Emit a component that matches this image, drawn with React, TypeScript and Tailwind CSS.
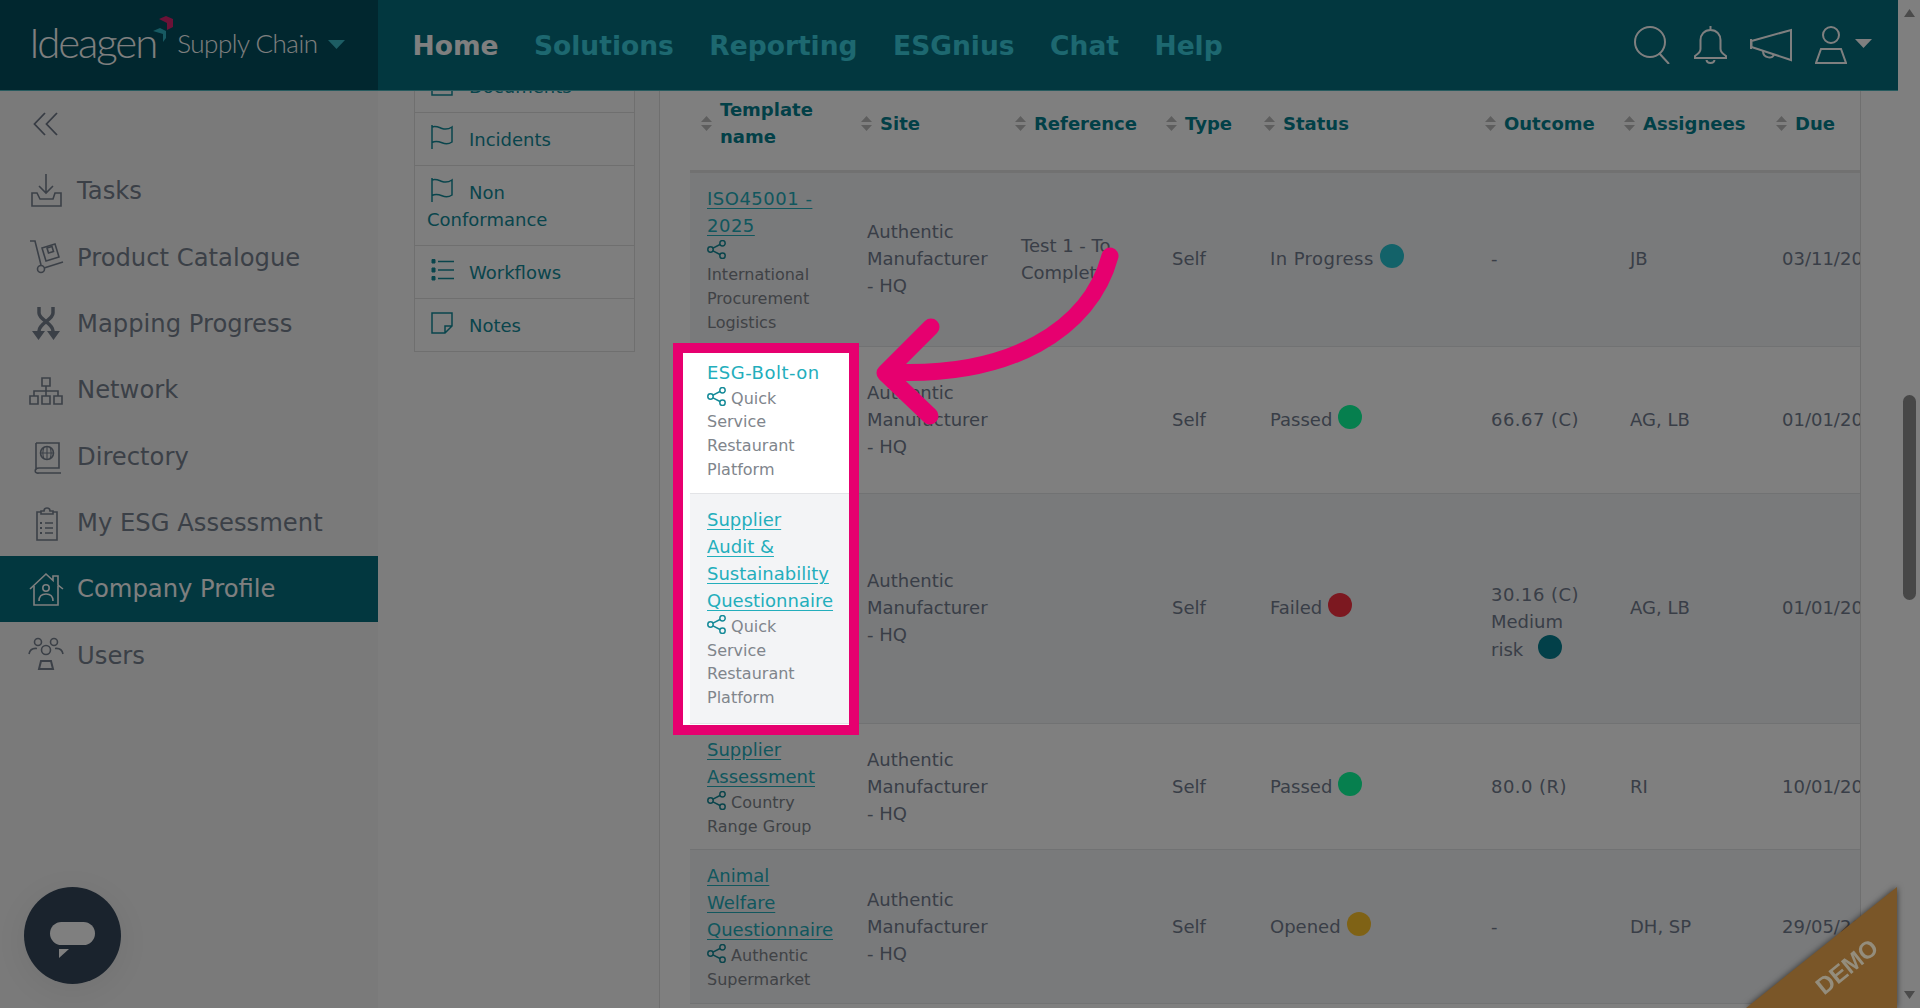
import React from "react";

const iconBox = "inline-block -my-[4px] mr-[16px] ml-[4px] align-[1px]";
const Flag = () => (
  <svg viewBox="0 0 22 24" width="22" height="24" fill="none" stroke="currentColor" strokeWidth="1.5" className={iconBox}>
    <path d="M1 0V24M1 2c4-1.5 7 .5 10 1.5s7 .5 10-1.5V17c-3 2-7 2-10 .8S4 16 1 17.500" />
  </svg>
);
const DocIcon = () => (
  <svg viewBox="0 0 22 24" width="22" height="24" fill="none" stroke="currentColor" strokeWidth="1.5" className={iconBox}>
    <path d="M1 1H21V23H1Z" />
  </svg>
);
const ListIcon = () => (
  <svg viewBox="0 0 24 24" width="24" height="24" fill="none" stroke="currentColor" strokeWidth="1.5" className="inline-block -my-[4px] mr-[14px] ml-[4px] align-[1px]">
    <path d="M7 3.500H23M7 12H23M7 20.500H23" />
    <path d="M1 1.500H4V5H1ZM1 10H4V14H1ZM1 18.500H4V22H1Z" fill="currentColor" strokeWidth="1" />
  </svg>
);
const NoteIcon = () => (
  <svg viewBox="0 0 22 24" width="22" height="24" fill="none" stroke="currentColor" strokeWidth="1.5" className={iconBox}>
    <path d="M1 2H21V15L14 22H1ZM21 15H14V22" />
  </svg>
);
const Share = () => (
  <svg viewBox="0 0 19 19" width="19" height="19" fill="none" stroke="#148a98" strokeWidth="1.500" className="inline-block -my-[3px] align-[1px]">
    <circle cx="3.500" cy="9.500" r="2.700" />
    <circle cx="15.500" cy="3.200" r="2.700" />
    <circle cx="15.500" cy="15.800" r="2.700" />
    <path d="M6 8.200 13 4.500M6 10.800 13 14.500" />
  </svg>
);
const Sort = () => (
  <svg viewBox="0 0 11 15" width="11" height="15" className="shrink-0" fill="#bdbdbd">
    <path d="M5.500 0 11 6H0ZM0 9H11L5.500 15Z" />
  </svg>
);
const Dot = ({ c }: { c: string }) => <span className={`inline-block size-[24px] rounded-full ml-[6px] -my-[2px] align-[-1px] ${c}`} />;

const sideIcons: Record<string, React.ReactNode> = {
  tasks: (
    <>
      <path d="M18 1V20M11 13l7 7 7-7" />
      <path d="M9 20H4V33H33V20H27L25 26H12L9 20Z" />
    </>
  ),
  product: (
    <>
      <path d="M2 2H7L13 26" />
      <circle cx="13" cy="30" r="3.500" />
      <path d="M16 29 35 23" />
      <path d="M14 9 27 5l4 13-13 4Z" />
      <path d="M19 9l5-1.500 1.500 5-5 1.500Z" />
    </>
  ),
  map: (
    <>
      <path d="M11 1V7C11 14 25 17 25 25V30" strokeWidth="3.500" />
      <path d="M25 1V7C25 14 11 17 11 25V30" strokeWidth="3.500" />
      <path d="M4 25H17L10.500 34ZM19 25H32L25.500 34Z" fill="currentColor" stroke="none" />
    </>
  ),
  network: (
    <>
      <path d="M14 6H22V14H14ZM2 24H10V32H2ZM14 24H22V32H14ZM26 24H34V32H26Z" />
      <path d="M18 14V24M6 24V19H30V24" />
    </>
  ),
  dir: (
    <>
      <path d="M8 5H31V30H11C6 30 6 36 11 35H33M8 5V32" />
      <circle cx="19" cy="15" r="6.500" />
      <path d="M12.500 15H25.500M19 8.500V21.500M16 9C14.500 13 14.500 17 16 21M22 9C23.500 13 23.500 17 22 21" strokeWidth="1.100" />
    </>
  ),
  esg: (
    <>
      <path d="M13 7H9V35H29V7H25" />
      <path d="M13 9V6H16C16 2 22 2 22 6H25V9Z" />
      <path d="M17 18H25M17 23H25M17 28H25" />
      <path d="M12 18H14M12 23H14M12 28H14" strokeWidth="2" />
    </>
  ),
  company: (
    <>
      <path d="M2 18 18 3l7 6.500V5H30V14L35 18" />
      <path d="M6 15V34H30V15" />
      <circle cx="18" cy="17" r="3.200" />
      <path d="M11 30C11 25 14 23 18 23S25 25 25 30" />
    </>
  ),
  users: (
    <>
      <circle cx="10" cy="5" r="3.500" />
      <circle cx="26" cy="5" r="3.500" />
      <circle cx="18" cy="13" r="4.500" />
      <path d="M1 17C2 12 5 11 9 11.500M35 17C34 12 31 11 27 11.500" />
      <path d="M11 32 13 24H23L25 32Z" strokeWidth="2" />
    </>
  ),
};

const SideItem = ({ icon, label, active }: { icon: string; label: string; active?: boolean }) => (
  <div className={`h-[66.300px] flex items-center pl-[28px] gap-[13px] text-[24.250px] ${active ? "bg-[#046e7e] text-white" : "text-[#77818f]"}`}>
    <svg viewBox="0 0 36 36" width="36" height="36" fill="none" stroke="currentColor" strokeWidth="1.600" className="shrink-0">
      {sideIcons[icon]}
    </svg>
    <span className="pt-[1px]">{label}</span>
  </div>
);

const SubItem = ({ children }: { children: React.ReactNode }) => (
  <div className="border-b border-[#dedede] px-[12px] py-[12.500px] text-[18px] leading-[27px] text-[#128a99] last:border-b-0">{children}</div>
);

const Name = ({ title, org, link = true, spaced }: { title: string; org: React.ReactNode; link?: boolean; spaced?: boolean }) => (
  <td className="align-top pl-[17px] pr-[18px] pt-[12px] pb-[11px]">
    <div className={`text-[18px] leading-[27px] text-[#23aebc] ${link ? "underline underline-offset-[3px]" : ""} ${spaced ? "tracking-[0.500px]" : ""}`}>{title}</div>
    <div className="mt-[1px] text-[16px] leading-[23.800px] text-[#80858c]">
      <Share /> {org}
    </div>
  </td>
);

const Cell = ({ children, className = "" }: { children?: React.ReactNode; className?: string }) => (
  <td className={`align-middle pl-[17px] pb-[1px] text-[18px] leading-[27px] text-[#727d8f] ${className}`}>{children}</td>
);

const Row = ({ bg, children, className = "" }: { bg: boolean; children: React.ReactNode; className?: string }) => (
  <tr className={`border-b border-[#e3e4e7] ${bg ? "bg-[#f3f4f6]" : "bg-white"} ${className}`}>{children}</tr>
);

const Site = () => (
  <Cell>
    Authentic
    <br />
    Manufacturer
    <br />- HQ
  </Cell>
);

const Score = ({ children }: { children: React.ReactNode }) => <span className="tracking-[0.450px]">{children}</span>;

const heads = ["Template name", "Site", "Reference", "Type", "Status", "Outcome", "Assignees", "Due"];

export default function App() {
  return (
    <div className="relative h-[1008px] w-full overflow-hidden flex bg-white font-['DejaVu_Sans',sans-serif]">
      <div className="w-[1898px] shrink-0 flex flex-col h-full">
        <header className="h-[91px] shrink-0 flex bg-[#046e7e] border-b border-[#4fb5bd]">
          <div className="w-[378px] shrink-0 bg-[#024e5e] flex items-center pl-[29px] pb-[1px] font-['Lato',sans-serif] font-light text-white">
            <span className="text-[42px] tracking-[-2.100px] leading-none mb-[6px]">Ideagen</span>
            <svg viewBox="0 0 20 28" width="20" height="28" className="-ml-[3px] mb-[30px] shrink-0">
              <path d="M6 3 13 0l7 3v8l-6 3v-7Z" fill="#d8246f" />
              <path d="M0 15l7-3 6 3v7l-3 4v-8Z" fill="#2fb4c4" />
            </svg>
            <span className="text-[26px] tracking-[-0.500px] ml-[4px] mb-[2px]">Supply Chain</span>
            <svg viewBox="0 0 17 9" width="17" height="9" className="ml-[11px] shrink-0">
              <path d="M0 0H17L8.500 9Z" fill="#3bbac8" />
            </svg>
          </div>
          <nav className="flex items-center gap-[35.500px] pl-[34.500px] pt-[2px] text-[26.500px] font-bold text-[#3bd0e0]">
            <span className="text-white">Home</span>
            <span>Solutions</span>
            <span>Reporting</span>
            <span>ESGnius</span>
            <span>Chat</span>
            <span>Help</span>
          </nav>
          <div className="ml-auto flex items-center pr-[26px] text-white">
            <svg viewBox="0 0 36 38" width="36" height="38" fill="none" stroke="currentColor" strokeWidth="2">
              <circle cx="16" cy="16" r="15" />
              <path d="M25 27 35 38" />
            </svg>
            <svg viewBox="0 0 33 38" width="33" height="38" fill="none" stroke="currentColor" strokeWidth="2" className="ml-[24px]">
              <path d="M16.500 0V4M16.500 4C10 4 6.500 9 6.500 14V23C6.500 26 4 28 1 30V32H32V30C29 28 26.500 26 26.500 23V14C26.500 9 23 4 16.500 4Z" />
              <path d="M12.500 34C13 38 20 38 20.500 34" />
            </svg>
            <svg viewBox="0 0 42 34" width="42" height="34" fill="none" stroke="currentColor" strokeWidth="2" className="ml-[23px]">
              <path d="M1 11V21M1.500 13 41 2V32L1.500 19Z" />
              <path d="M13 23C13 31 24 31 24 26" />
            </svg>
            <svg viewBox="0 0 32 38" width="32" height="38" fill="none" stroke="currentColor" strokeWidth="2" className="ml-[23px]">
              <circle cx="16" cy="9" r="8" />
              <path d="M6 23H26L31 37H1Z" />
            </svg>
            <svg viewBox="0 0 17 9" width="17" height="9" className="ml-[8px] mb-[4px]">
              <path d="M0 0H17L8.500 9Z" fill="currentColor" />
            </svg>
          </div>
        </header>
        <div className="flex-1 flex min-h-0">
          <aside className="w-[378px] shrink-0 bg-[#f5f5f5] flex flex-col">
            <div className="h-[67px] flex items-center pl-[33px] text-[#6f7888]">
              <svg viewBox="0 0 25 24" width="25" height="24" fill="none" stroke="currentColor" strokeWidth="1.800" className="mb-[1px]">
                <path d="M12 1 1.500 12 12 23M24 1 13.500 12 24 23" />
              </svg>
            </div>
            <SideItem icon="tasks" label="Tasks" />
            <SideItem icon="product" label="Product Catalogue" />
            <SideItem icon="map" label="Mapping Progress" />
            <SideItem icon="network" label="Network" />
            <SideItem icon="dir" label="Directory" />
            <SideItem icon="esg" label="My ESG Assessment" />
            <SideItem icon="company" label="Company Profile" active />
            <SideItem icon="users" label="Users" />
          </aside>
          <div className="w-[281px] shrink-0 bg-[#fafafa] pl-[36px] overflow-hidden">
            <div className="w-[221px] -mt-[32px] border border-[#dedede] bg-[#fcfcfc]">
              <SubItem>
                <DocIcon />
                Documents
              </SubItem>
              <SubItem>
                <Flag />
                Incidents
              </SubItem>
              <SubItem>
                <Flag />
                Non Conformance
              </SubItem>
              <SubItem>
                <ListIcon />
                Workflows
              </SubItem>
              <SubItem>
                <NoteIcon />
                Notes
              </SubItem>
            </div>
          </div>
          <div className="flex-1 border-l border-[#dedede] pl-[30px] overflow-hidden">
            <div className="w-[1171px] border-r border-[#dedede] h-full">
              <table className="table-fixed w-[1170px]">
                <colgroup>
                  <col className="w-[160px]" />
                  <col className="w-[154px]" />
                  <col className="w-[151px]" />
                  <col className="w-[98px]" />
                  <col className="w-[221px]" />
                  <col className="w-[139px]" />
                  <col className="w-[152px]" />
                  <col className="w-[95px]" />
                </colgroup>
                <thead>
                  <tr className="h-[80px] border-b-[3px] border-[#e2e2e2]">
                    {heads.map((h) => (
                      <th key={h} className="pl-[11px] align-middle text-left font-bold text-[18px] leading-[27px] text-[#04808f]">
                        <div className="flex items-center gap-[8px] pb-[14px]">
                          <Sort />
                          <span>{h}</span>
                        </div>
                      </th>
                    ))}
                  </tr>
                </thead>
                <tbody>
                  <Row bg className="h-[175px]">
                    <Name title="ISO45001 - 2025" spaced org="International Procurement Logistics" />
                    <Site />
                    <Cell>
                      Test 1 - To
                      <br />
                      Complete
                    </Cell>
                    <Cell>Self</Cell>
                    <Cell>
                      <span className="tracking-[0.400px]">In Progress</span>
                      <Dot c="bg-[#26c4d2]" />
                    </Cell>
                    <Cell>-</Cell>
                    <Cell>JB</Cell>
                    <Cell className="whitespace-nowrap overflow-hidden">03/11/2025</Cell>
                  </Row>
                  <Row bg={false}>
                    <Name title="ESG-Bolt-on" link={false} spaced org="Quick Service Restaurant Platform" />
                    <Site />
                    <Cell />
                    <Cell>Self</Cell>
                    <Cell>
                      Passed
                      <Dot c="bg-[#0cfe9c]" />
                    </Cell>
                    <Cell>
                      <Score>66.67 (C)</Score>
                    </Cell>
                    <Cell>AG, LB</Cell>
                    <Cell className="whitespace-nowrap overflow-hidden">01/01/2026</Cell>
                  </Row>
                  <Row bg className="h-[230px]">
                    <Name title="Supplier Audit & Sustainability Questionnaire" org="Quick Service Restaurant Platform" />
                    <Site />
                    <Cell />
                    <Cell>Self</Cell>
                    <Cell>
                      Failed
                      <Dot c="bg-[#f83040]" />
                    </Cell>
                    <Cell className="pt-[28px]">
                      <Score>30.16 (C)</Score>
                      <br />
                      Medium
                      <br />
                      <span className="inline-block mt-[1px]">
                        risk <Dot c="bg-[#048092] ml-[9px]" />
                      </span>
                    </Cell>
                    <Cell>AG, LB</Cell>
                    <Cell className="whitespace-nowrap overflow-hidden">01/01/2026</Cell>
                  </Row>
                  <Row bg={false}>
                    <Name title="Supplier Assessment" org="Country Range Group" />
                    <Site />
                    <Cell />
                    <Cell>Self</Cell>
                    <Cell>
                      Passed
                      <Dot c="bg-[#0cfe9c]" />
                    </Cell>
                    <Cell>
                      <Score>80.0 (R)</Score>
                    </Cell>
                    <Cell>RI</Cell>
                    <Cell className="whitespace-nowrap overflow-hidden">10/01/2026</Cell>
                  </Row>
                  <Row bg>
                    <Name title="Animal Welfare Questionnaire" org="Authentic Supermarket" />
                    <Site />
                    <Cell />
                    <Cell>Self</Cell>
                    <Cell>
                      Opened
                      <Dot c="bg-[#ffc42a]" />
                    </Cell>
                    <Cell>-</Cell>
                    <Cell>DH, SP</Cell>
                    <Cell className="whitespace-nowrap overflow-hidden">29/05/2025</Cell>
                  </Row>
                </tbody>
              </table>
            </div>
          </div>
        </div>
      </div>
      <div className="flex-1 flex flex-col items-center bg-white pt-[9px] pb-[9px] text-[#969696]">
        <svg viewBox="0 0 11 8" width="11" height="8" fill="currentColor">
          <path d="M5.500 0 11 8H0Z" />
        </svg>
        <div className="mt-[378px] w-[13px] h-[205px] rounded-full bg-[#8e8e8e]" />
        <svg viewBox="0 0 11 8" width="11" height="8" fill="currentColor" className="mt-auto">
          <path d="M0 0H11L5.500 8Z" />
        </svg>
      </div>

      {/* chat launcher */}
      <div className="absolute left-[24px] top-[887px] size-[97px] rounded-full bg-[#34465a] shadow-[0_6px_40px_rgba(0,0,0,0.08)]">
        <div className="absolute left-[26px] top-[35px] w-[45px] h-[23px] rounded-full bg-white" />
        <svg viewBox="0 0 10 9" width="10" height="9" className="absolute left-[35px] top-[62px]">
          <path d="M0 0H10L0 9Z" fill="#fff" />
        </svg>
      </div>

      {/* guide overlay: dims everything but the highlighted cell */}
      <div className="absolute left-[673px] top-[343px] w-[186px] h-[392px] border-[10px] border-[#e6006f] shadow-[0_0_0_3000px_rgba(0,0,0,0.5)]" />
      <svg viewBox="0 0 1920 1008" className="absolute inset-0 w-full h-full pointer-events-none" fill="none" stroke="#e6006f" strokeWidth="17" strokeLinecap="round" strokeLinejoin="round">
        <path d="M1110 256C1090 330 1010 378 888 372" />
        <path d="M931 327 885 373 930 416" />
      </svg>

      {/* demo ribbon */}
      <div className="absolute right-[23px] bottom-0 w-[151px] h-[121px] drop-shadow-[0_0_3px_rgba(0,0,0,0.6)]">
        <div className="absolute inset-0 bg-[#7a5628] [clip-path:polygon(100%_0,100%_100%,0_100%)]" />
        <span className="absolute right-[14px] bottom-[23px] -rotate-[39deg] text-[24px] font-['Liberation_Sans',sans-serif] font-bold text-[#948d7c]">DEMO</span>
      </div>
    </div>
  );
}
